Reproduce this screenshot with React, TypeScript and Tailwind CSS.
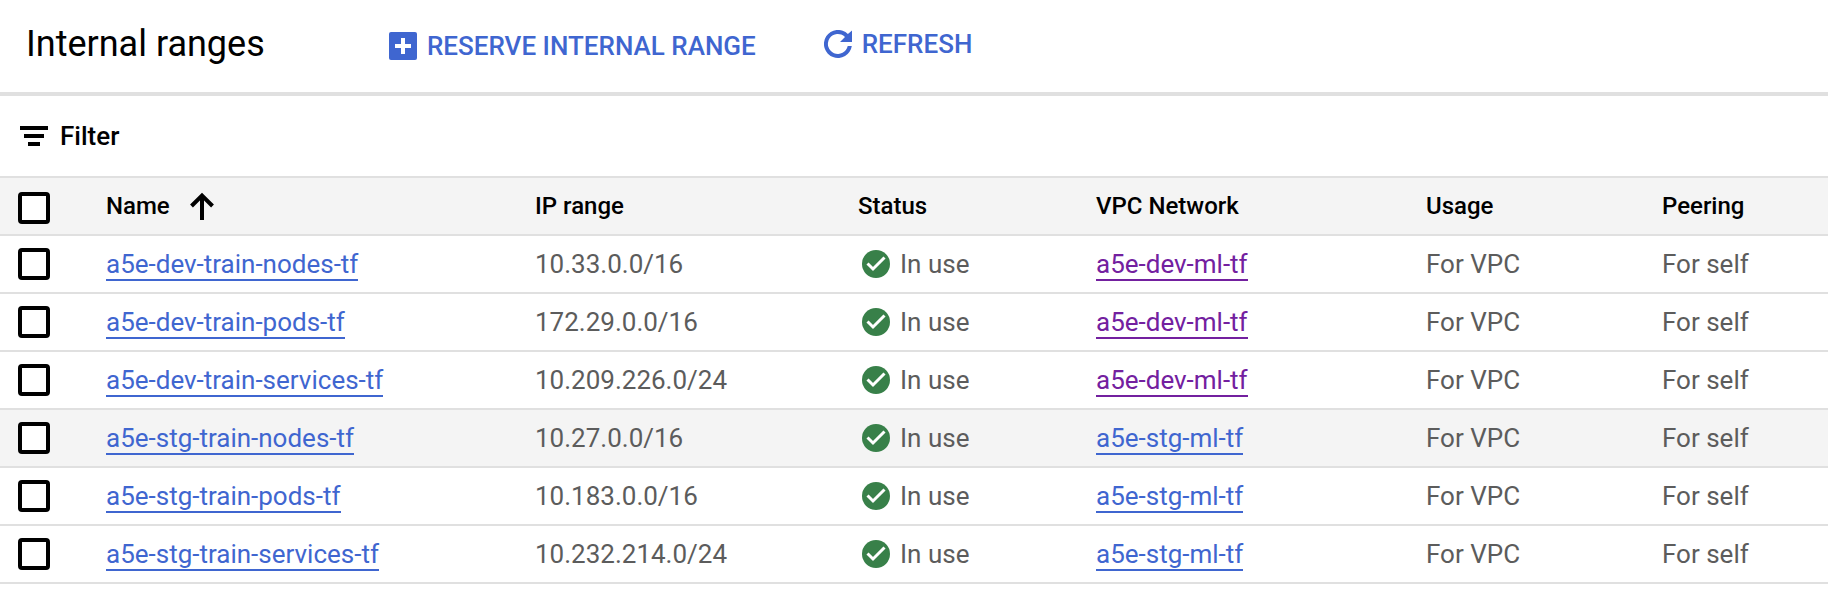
import React from "react";

type RangeRow = {
  name: string;
  ip: string;
  network: string;
  visited: boolean;
  highlighted: boolean;
};

const rows: RangeRow[] = [
  { name: "a5e-dev-train-nodes-tf", ip: "10.33.0.0/16", network: "a5e-dev-ml-tf", visited: true, highlighted: false },
  { name: "a5e-dev-train-pods-tf", ip: "172.29.0.0/16", network: "a5e-dev-ml-tf", visited: true, highlighted: false },
  { name: "a5e-dev-train-services-tf", ip: "10.209.226.0/24", network: "a5e-dev-ml-tf", visited: true, highlighted: false },
  { name: "a5e-stg-train-nodes-tf", ip: "10.27.0.0/16", network: "a5e-stg-ml-tf", visited: false, highlighted: true },
  { name: "a5e-stg-train-pods-tf", ip: "10.183.0.0/16", network: "a5e-stg-ml-tf", visited: false, highlighted: false },
  { name: "a5e-stg-train-services-tf", ip: "10.232.214.0/24", network: "a5e-stg-ml-tf", visited: false, highlighted: false },
];

function AddBoxIcon() {
  return (
    <svg className="size-7 shrink-0" viewBox="0 0 28 28" aria-hidden="true">
      <rect width="28" height="28" rx="2" fill="currentColor" />
      <path d="M12 6h4v6h6v4h-6v6h-4v-6H6v-4h6z" fill="#fff" />
    </svg>
  );
}

function RefreshIcon() {
  return (
    <svg className="size-7 shrink-0" viewBox="0 0 28 28" aria-hidden="true">
      <path
        d="M23.9 4.1A14 14 0 1 0 27.8 16h-4.1a10 10 0 1 1-2.7-9.1L16 12h12V0.4z"
        fill="currentColor"
      />
    </svg>
  );
}

function FilterIcon() {
  return (
    <svg className="h-5 w-7 shrink-0" viewBox="0 0 28 20" aria-hidden="true">
      <path d="M0 0h28v4H0zM4 8h20v4H4zM8 16h12v4H8z" fill="currentColor" />
    </svg>
  );
}

function SortIcon() {
  return (
    <svg className="size-7 shrink-0" viewBox="0 0 28 28" aria-hidden="true">
      <path d="M14 28V4M3.5 14 14 3.5 24.5 14" fill="none" stroke="currentColor" strokeWidth="4" />
    </svg>
  );
}

function CheckCircleIcon() {
  return (
    <svg className="size-7 shrink-0" viewBox="0 0 28 28" aria-hidden="true">
      <circle cx="14" cy="14" r="14" fill="#388049" />
      <path d="M5.5 13.5 11 19 22.5 7.5" fill="none" stroke="#fff" strokeWidth="3" />
    </svg>
  );
}

function Checkbox({ label }: { label: string }) {
  return (
    <input
      type="checkbox"
      aria-label={label}
      className="ml-[18px] block size-8 appearance-none rounded-[4px] border-4 border-black bg-white checked:bg-black"
    />
  );
}

function TextLink({ text, visited }: { text: string; visited: boolean }) {
  return (
    <a
      href="#"
      className={
        visited
          ? "inline-block border-b-2 border-[#73209f] pt-0.5 leading-[30px] text-[#73209f]"
          : "inline-block border-b-2 border-[#3f66d0] pt-0.5 leading-[30px] text-[#3f66d0]"
      }
    >
      {text}
    </a>
  );
}

export default function App() {
  return (
    <main className="min-h-screen bg-white font-['Roboto',sans-serif] text-black">
      <header className="flex h-24 items-center border-b-4 border-[#e0e0e0] pb-0.5 pl-[26px]">
        <h1 className="w-[363px] shrink-0 pb-0.5 text-[36px] leading-[44px] whitespace-nowrap">Internal ranges</h1>
        <div className="flex items-start gap-[68px] text-[26px] leading-8 font-medium whitespace-nowrap text-[#3f66d0]">
          <button type="button" className="flex items-center gap-[10px] pt-0.5">
            <AddBoxIcon />
            RESERVE INTERNAL RANGE
          </button>
          <button type="button" className="flex items-center gap-[10px]">
            <RefreshIcon />
            REFRESH
          </button>
        </div>
      </header>

      <div className="flex h-20 items-center px-5">
        <button type="button" className="flex items-center gap-3 text-[26px] leading-8 font-medium">
          <FilterIcon />
          Filter
        </button>
      </div>

      <div className="overflow-x-auto">
        <table className="w-full table-fixed border-separate border-spacing-0 text-left whitespace-nowrap">
          <colgroup>
            <col className="w-[106px]" />
            <col className="w-[429px]" />
            <col className="w-[323px]" />
            <col className="w-[238px]" />
            <col className="w-[330px]" />
            <col className="w-[236px]" />
            <col className="w-[166px]" />
          </colgroup>
          <thead>
            <tr className="h-[60px] bg-[#f4f4f4] text-[24px] leading-8 *:border-y-2 *:border-[#e0e0e0] *:p-0 *:font-medium">
              <th scope="col">
                <div className="pt-1">
                  <Checkbox label="Select all ranges" />
                </div>
              </th>
              <th scope="col" aria-sort="ascending">
                <button type="button" className="flex items-center gap-[18px]">
                  Name
                  <SortIcon />
                </button>
              </th>
              <th scope="col">IP range</th>
              <th scope="col">Status</th>
              <th scope="col">VPC Network</th>
              <th scope="col">Usage</th>
              <th scope="col">Peering</th>
            </tr>
          </thead>
          <tbody className="text-[26px] leading-8 text-[#5c5c5c]">
            {rows.map((row) => (
              <tr
                key={row.name}
                className={
                  row.highlighted
                    ? "h-[58px] bg-[#f4f4f4] *:border-b-2 *:border-[#e0e0e0] *:p-0"
                    : "h-[58px] *:border-b-2 *:border-[#e0e0e0] *:p-0"
                }
              >
                <td>
                  <Checkbox label={`Select ${row.name}`} />
                </td>
                <td>
                  <TextLink text={row.name} visited={false} />
                </td>
                <td>{row.ip}</td>
                <td>
                  <span className="flex items-center gap-[10px] pl-1">
                    <CheckCircleIcon />
                    In use
                  </span>
                </td>
                <td>
                  <TextLink text={row.network} visited={row.visited} />
                </td>
                <td>For VPC</td>
                <td>For self</td>
              </tr>
            ))}
          </tbody>
        </table>
      </div>
    </main>
  );
}
